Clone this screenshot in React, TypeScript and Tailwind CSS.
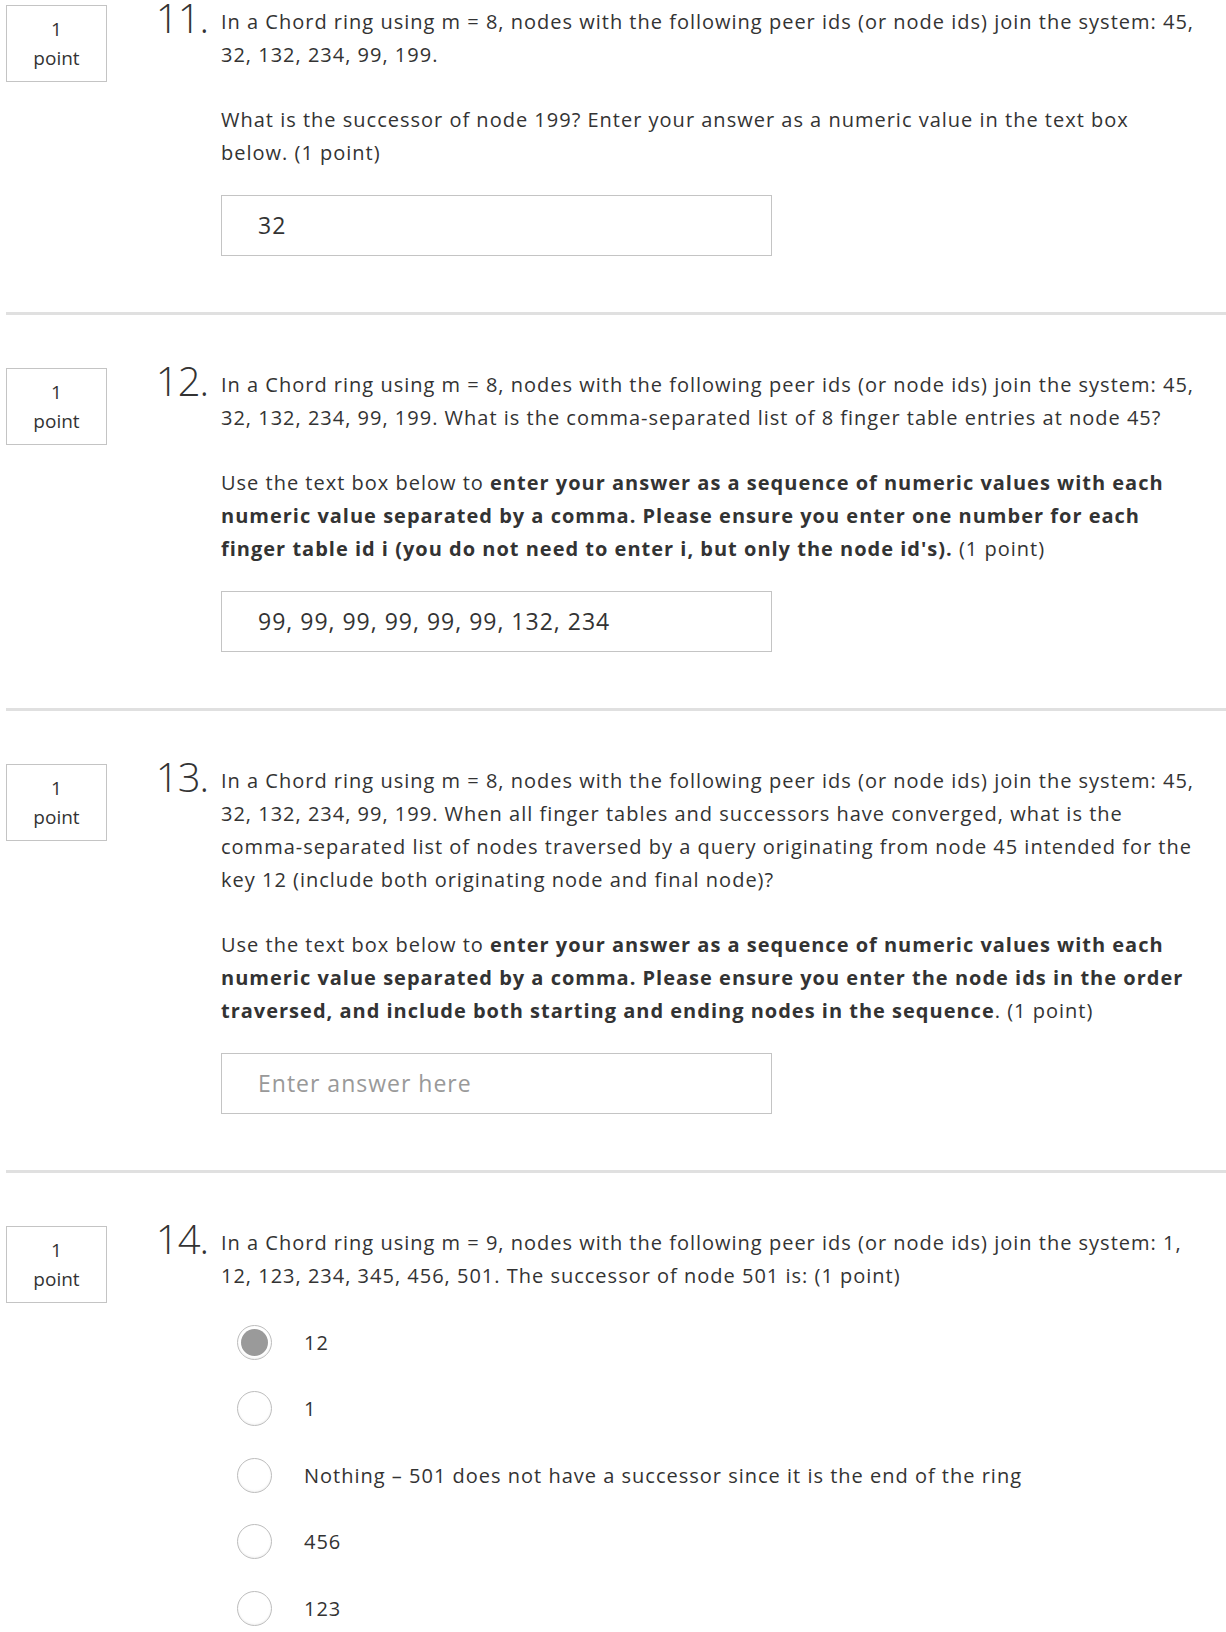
import React from "react";

const font = { fontFamily: '"Open Sans", "Noto Sans", sans-serif' };

function PointBox() {
  return (
    <div className="w-[101px] h-[77px] shrink-0 border border-[#c4c4c4] flex flex-col items-center justify-center text-[19px] leading-[29px] text-[#333]">
      <span>1</span>
      <span>point</span>
    </div>
  );
}

function Question({
  num,
  first,
  last,
  children,
}: {
  num: string;
  first?: boolean;
  last?: boolean;
  children: React.ReactNode;
}) {
  return (
    <div
      className={
        "ml-[6px] flex " +
        (first ? "pt-[5px] " : "pt-[53px] ") +
        (last ? "pb-[20px]" : "pb-[56px] border-b-[3px] border-[#e0e0e0]")
      }
    >
      <PointBox />
      <div className="w-[114px] shrink-0 text-right pr-[13px] text-[40px] font-light leading-[28px] -mt-[1px] text-[#333] tracking-[-1px]">
        {num}
      </div>
      <div className="w-[975px] text-[20px] leading-[33px] tracking-[1px] text-[#333]">{children}</div>
    </div>
  );
}

function TextInput({ value, placeholder }: { value?: string; placeholder?: string }) {
  return (
    <div className="mt-[26px] w-[551px] h-[61px] border border-[#c4c4c4] flex items-center pl-[36px] text-[23px] tracking-[1px]">
      {value ? (
        <span className="text-[#333]">{value}</span>
      ) : (
        <span className="text-[#999]">{placeholder}</span>
      )}
    </div>
  );
}

function Radio({ checked, label }: { checked?: boolean; label: string }) {
  return (
    <div className="flex items-center h-[66.5px]">
      <div className="ml-[16px] w-[35px] h-[35px] rounded-full border border-[#bdbdbd] bg-white flex items-center justify-center shadow-[inset_0_-1px_2px_rgba(0,0,0,0.06)]">
        {checked && <div className="w-[27px] h-[27px] rounded-full bg-[#9a9a9a]" />}
      </div>
      <span className="ml-[32px] text-[20px] text-[#333]">{label}</span>
    </div>
  );
}

export default function App() {
  return (
    <div className="w-[1226px] bg-white" style={font}>
      <Question num="11." first>
        <p>
          In a Chord ring using m = 8, nodes with the following peer ids (or node ids) join the system: 45, 32,
          132, 234, 99, 199.
        </p>
        <p className="mt-[32px]">
          What is the successor of node 199? Enter your answer as a numeric value in the text box below. (1
          point)
        </p>
        <TextInput value="32" />
      </Question>
      <Question num="12.">
        <p>
          In a Chord ring using m = 8, nodes with the following peer ids (or node ids) join the system: 45, 32,
          132, 234, 99, 199. What is the comma-separated list of 8 finger table entries at node 45?
        </p>
        <p className="mt-[32px]">
          Use the text box below to{" "}
          <b className="font-bold">
            enter your answer as a sequence of numeric values with each numeric value separated by a comma.
            Please ensure you enter one number for each finger table id i (you do not need to enter i, but only
            the node id's).
          </b>{" "}
          (1 point)
        </p>
        <TextInput value="99, 99, 99, 99, 99, 99, 132, 234" />
      </Question>
      <Question num="13.">
        <p>
          In a Chord ring using m = 8, nodes with the following peer ids (or node ids) join the system: 45, 32,
          132, 234, 99, 199. When all finger tables and successors have converged, what is the comma-separated
          list of nodes traversed by a query originating from node 45 intended for the key 12 (include both
          originating node and final node)?
        </p>
        <p className="mt-[32px]">
          Use the text box below to{" "}
          <b className="font-bold">
            enter your answer as a sequence of numeric values with each numeric value separated by a comma.
            Please ensure you enter the node ids in the order traversed, and include both starting and ending
            nodes in the sequence
          </b>
          . (1 point)
        </p>
        <TextInput placeholder="Enter answer here" />
      </Question>
      <Question num="14." last>
        <p>
          In a Chord ring using m = 9, nodes with the following peer ids (or node ids) join the system: 1, 12,
          123, 234, 345, 456, 501. The successor of node 501 is: (1 point)
        </p>
        <div className="mt-[17px] tracking-[1px]">
          <Radio checked label="12" />
          <Radio label="1" />
          <Radio label="Nothing – 501 does not have a successor since it is the end of the ring" />
          <Radio label="456" />
          <Radio label="123" />
        </div>
      </Question>
    </div>
  );
}
